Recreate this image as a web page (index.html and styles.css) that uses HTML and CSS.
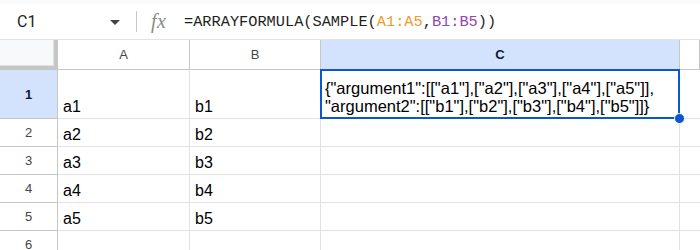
FILE: index.html
```html
<!DOCTYPE html>
<html>
<head>
<meta charset="utf-8">
<link rel="stylesheet" href="styles.css">
</head>
<body>
<div class="app">
  <div class="topstrip"></div>
  <div class="fbar">
    <div class="namebox">C1</div>
    <svg class="caret" width="10" height="5" viewBox="0 0 10 5"><path d="M0 0 L10 0 L5 5 Z" fill="#444"/></svg>
    <div class="divider"></div>
    <div class="fx">fx</div>
    <div class="formula">=ARRAYFORMULA(SAMPLE(<span class="r1">A1:A5</span>,<span class="r2">B1:B5</span>))</div>
  </div>
  <div class="grid">
    <div class="corner"></div>
    <div class="ch">A</div>
    <div class="ch">B</div>
    <div class="ch sel">C</div>
    <div class="ch last"></div>

    <div class="rh sel">1</div>
    <div class="cell">a1</div>
    <div class="cell">b1</div>
    <div class="cell c1">{"argument1":[["a1"],["a2"],["a3"],["a4"],["a5"]],<br>"argument2":[["b1"],["b2"],["b3"],["b4"],["b5"]]}
      <div class="selbox"></div><div class="handle"></div>
    </div>
    <div class="cell last"></div>

    <div class="rh">2</div><div class="cell">a2</div><div class="cell">b2</div><div class="cell"></div><div class="cell last"></div>
    <div class="rh">3</div><div class="cell">a3</div><div class="cell">b3</div><div class="cell"></div><div class="cell last"></div>
    <div class="rh">4</div><div class="cell">a4</div><div class="cell">b4</div><div class="cell"></div><div class="cell last"></div>
    <div class="rh">5</div><div class="cell">a5</div><div class="cell">b5</div><div class="cell"></div><div class="cell last"></div>
    <div class="rh">6</div><div class="cell"></div><div class="cell"></div><div class="cell"></div><div class="cell last"></div>
  </div>
</div>
</body>
</html>
```
FILE: styles.css
```css
* { box-sizing: border-box; }
html, body { margin: 0; padding: 0; background: #fff; overflow: hidden; }
.app { width: 700px; height: 250px; overflow: hidden; font-family: "Liberation Sans", Arial, sans-serif; }
.topstrip { height: 4px; background: #f9fbfd; }
.fbar {
  height: 36px; display: flex; align-items: center; background: #fff;
  border-bottom: 1px solid #e3e3e3;
}
.namebox { font-family: Roboto, "Liberation Sans", sans-serif; font-size: 16px; color: #1f1f1f; padding-left: 17px; width: 110px; }
.caret { margin-top: 1px; }
.divider { width: 1px; height: 21px; background: #c7c7c7; margin-left: 16px; }
.fx { font-family: "Liberation Serif", "DejaVu Serif", serif; font-style: italic; font-size: 20px; color: #8a8a8a; margin-left: 14px; width: 33px; letter-spacing: 0.5px; }
.formula { font-family: "Liberation Mono", monospace; font-size: 15.3px; color: #1f1f1f; white-space: nowrap; }
.r1 { color: #f19a2a; }
.r2 { color: #9446ad; }

.grid {
  display: grid;
  grid-template-columns: 58px 132px 131px 359px 20px;
  grid-template-rows: 30px 49px 28px 28px 28px 28px 28px;
}
.corner { background: #f8f9fa; border-right: 4px solid #c4c7c5; border-bottom: 4px solid #c4c7c5; box-shadow: inset -1px -1px 0 #e1e1e1; }
.ch {
  border-right: 1px solid #c4c7c5; border-bottom: 1px solid #c4c7c5;
  display: flex; align-items: center; justify-content: center;
  font-size: 13px; color: #444746; background: #fff;
}
.ch.sel { background: #d3e3fd; color: #0b1a3a; font-weight: bold; }
.rh {
  border-right: 1px solid #c4c7c5; border-bottom: 1px solid #c4c7c5;
  display: flex; align-items: center; justify-content: center;
  font-size: 13px; color: #444746; background: #fff;
}
.rh.sel { background: #d3e3fd; color: #0b1a3a; font-weight: bold; }
.cell {
  border-right: 1px solid #e1e1e1; border-bottom: 1px solid #e1e1e1;
  display: flex; align-items: flex-end;
  font-size: 16px; color: #000; padding: 0 4px 3px 5px; line-height: 17.5px;
  white-space: nowrap;
}
.cell.last { border-right: none; }
.c1 { position: relative; display: block; padding: 10px 3px 0 4px; font-size: 16.5px; }
.selbox { position: absolute; left: -1px; top: -1px; right: -1px; bottom: -1px; border: 2px solid #0b57d0; pointer-events: none; }
.handle { position: absolute; right: -6px; bottom: -6px; width: 11px; height: 11px; border-radius: 50%; background: #0b57d0; border: 1px solid #fff; }
```
